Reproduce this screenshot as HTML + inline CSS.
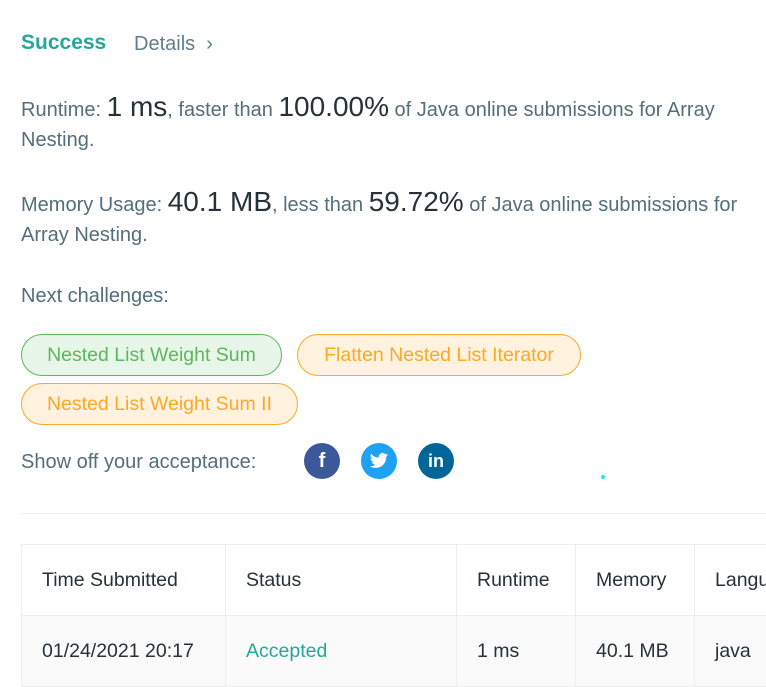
<!DOCTYPE html>
<html><head><meta charset="utf-8"><style>
*{margin:0;padding:0;box-sizing:border-box}
body{width:766px;height:683px;overflow:hidden;background:#fff;font-family:"Liberation Sans",sans-serif;color:#546e7a;position:relative}
.a{position:absolute;white-space:nowrap}
.t{font-size:20px}
.big{font-size:28px;color:#263238}
.pill{position:absolute;height:42px;border-radius:21px;font-size:19.5px;line-height:40px;text-align:center;white-space:nowrap}
.g{background:#e8f5e9;border:1px solid #5cb85c;color:#5cb85c}
.o{background:#fff3e0;border:1px solid #ffa726;color:#ffa726}
.ic{position:absolute;width:36px;height:36px;border-radius:50%;top:443px;color:#fff;font-weight:bold;text-align:center;line-height:36px;font-size:20px}
table{position:absolute;left:21px;top:544px;border-collapse:collapse;font-size:19.5px;color:#263238;table-layout:fixed;width:820px}
td{border:1px solid #eee;padding:0 20px;white-space:nowrap;overflow:hidden}
</style></head><body>
<div class="a" style="left:21px;top:31px;font-size:21px;font-weight:bold;color:#26a69a">Success</div>
<div class="a" style="left:134px;top:33px;font-size:20px;color:#607d8b">Details &nbsp;›</div>
<div class="a t" style="left:21px;top:91px">Runtime: <span class="big">1 ms</span>, faster than <span class="big">100.00%</span> of Java online submissions for Array</div>
<div class="a t" style="left:21px;top:129px">Nesting.</div>
<div class="a t" style="left:21px;top:186px">Memory Usage: <span class="big">40.1 MB</span>, less than <span class="big">59.72%</span> of Java online submissions for</div>
<div class="a t" style="left:21px;top:224px">Array Nesting.</div>
<div class="a t" style="left:21px;top:285px">Next challenges:</div>
<div class="pill g" style="left:21px;top:334px;width:261px">Nested List Weight Sum</div>
<div class="pill o" style="left:297px;top:334px;width:284px">Flatten Nested List Iterator</div>
<div class="pill o" style="left:21px;top:383px;width:277px">Nested List Weight Sum II</div>
<div class="a t" style="left:21px;top:451px">Show off your acceptance:</div>
<div class="ic" style="left:304px;background:#3b5998">f</div>
<div class="ic" style="left:361px;background:#1da1f2;font-size:16px">
<svg width="20" height="20" viewBox="0 0 24 24" style="margin-top:8px"><path fill="#fff" d="M23 4.6a9 9 0 0 1-2.6.7 4.5 4.5 0 0 0 2-2.5 9 9 0 0 1-2.9 1.1A4.5 4.5 0 0 0 11.8 8 12.8 12.8 0 0 1 2.5 3.3a4.5 4.5 0 0 0 1.4 6 4.5 4.5 0 0 1-2-.6 4.5 4.5 0 0 0 3.6 4.5 4.5 4.5 0 0 1-2 .1 4.5 4.5 0 0 0 4.2 3.1A9 9 0 0 1 1 18.3 12.8 12.8 0 0 0 7.9 20.3c8.3 0 12.8-6.9 12.8-12.8v-.6A9 9 0 0 0 23 4.6z"/></svg></div>
<div class="ic" style="left:418px;background:#006699;font-size:18px">in</div>
<div class="a" style="left:601px;top:475px;width:4px;height:4px;border-radius:50%;background:#1de9f6"></div>
<div class="a" style="left:21px;top:513px;width:745px;height:1px;background:#eee"></div>
<table>
<colgroup><col style="width:204px"><col style="width:231px"><col style="width:119px"><col style="width:119px"><col style="width:147px"></colgroup>
<tr style="height:71px"><td>Time Submitted</td><td>Status</td><td>Runtime</td><td>Memory</td><td>Language</td></tr>
<tr style="height:71px;background:#fafafa"><td>01/24/2021 20:17</td><td style="color:#26a69a">Accepted</td><td>1 ms</td><td>40.1 MB</td><td>java</td></tr>
</table>
</body></html>
